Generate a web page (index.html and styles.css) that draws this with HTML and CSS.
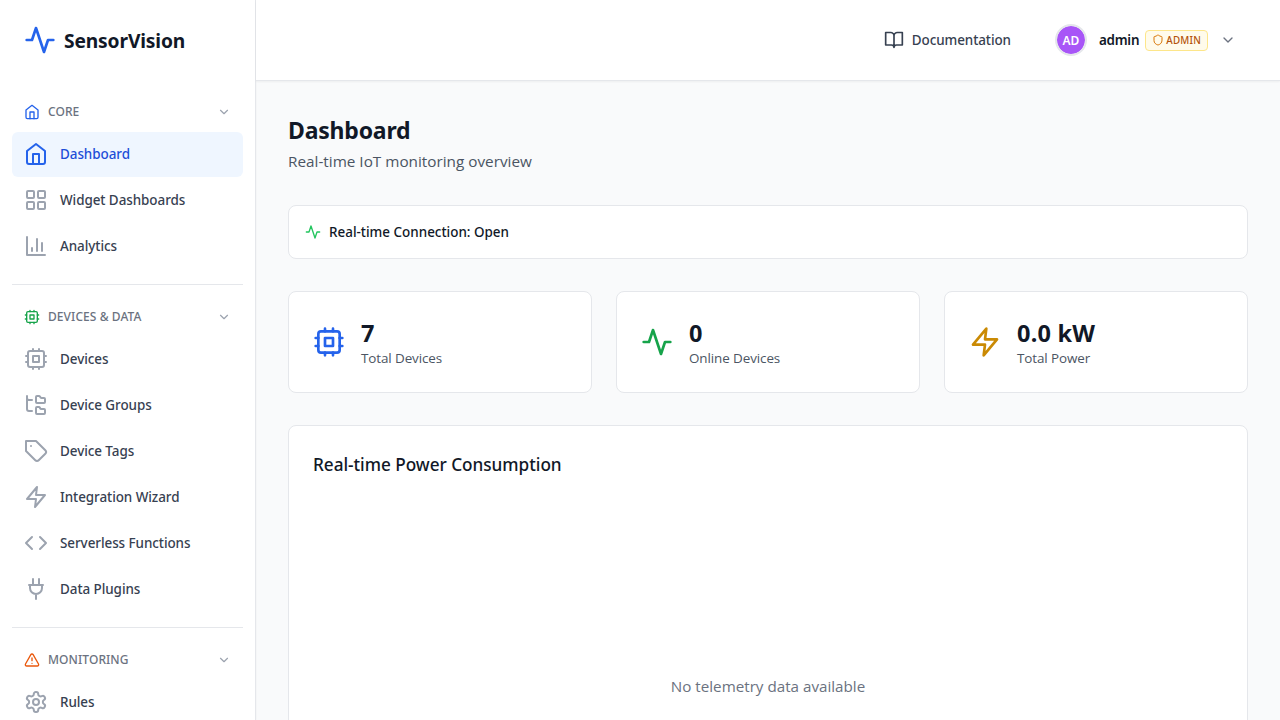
FILE: index.html
```
<!DOCTYPE html>
<html lang="en">
<head>
<meta charset="utf-8">
<title>SensorVision</title>
<link rel="stylesheet" href="styles.css">
</head>
<body>
<svg class="sprite" aria-hidden="true">
  <symbol id="activity" viewBox="0 0 24 24"><path d="M22 12h-4l-3 9L9 3l-3 9H2"/></symbol>
  <symbol id="home" viewBox="0 0 24 24"><path d="m3 9 9-7 9 7v11a2 2 0 0 1-2 2H5a2 2 0 0 1-2-2z"/><path d="M9 22V12h6v10"/></symbol>
  <symbol id="grid" viewBox="0 0 24 24"><rect x="3" y="3" width="7" height="7" rx="1"/><rect x="14" y="3" width="7" height="7" rx="1"/><rect x="14" y="14" width="7" height="7" rx="1"/><rect x="3" y="14" width="7" height="7" rx="1"/></symbol>
  <symbol id="chart" viewBox="0 0 24 24"><path d="M3 3v18h18M18 17V9M13 17V5M8 17v-3"/></symbol>
  <symbol id="cpu" viewBox="0 0 24 24"><rect x="4" y="4" width="16" height="16" rx="2"/><rect x="9" y="9" width="6" height="6"/><path d="M15 2v2M15 20v2M2 15h2M2 9h2M20 15h2M20 9h2M9 2v2M9 20v2"/></symbol>
  <symbol id="tree" viewBox="0 0 24 24"><path d="M13 10h7a1 1 0 0 0 1-1V6a1 1 0 0 0-1-1h-2.500a1 1 0 0 1-.8-.4l-.9-1.200A1 1 0 0 0 15 3h-2a1 1 0 0 0-1 1v5a1 1 0 0 0 1 1Z"/><path d="M13 21h7a1 1 0 0 0 1-1v-3a1 1 0 0 0-1-1h-2.880a1 1 0 0 1-.9-.55l-.44-.9a1 1 0 0 0-.9-.55H13a1 1 0 0 0-1 1v5a1 1 0 0 0 1 1Z"/><path d="M3 3v2c0 1.100.9 2 2 2h3M3 3v13c0 1.100.9 2 2 2h3"/></symbol>
  <symbol id="tag" viewBox="0 0 24 24"><path d="M12 2H2v10l9.290 9.290c.94.94 2.480.94 3.420 0l6.580-6.580c.94-.94.94-2.480 0-3.420L12 2Z"/><path d="M7 7h.01"/></symbol>
  <symbol id="zap" viewBox="0 0 24 24"><path d="M13 2 3 14h9l-1 8 10-12h-9l1-8z"/></symbol>
  <symbol id="code" viewBox="0 0 24 24"><path d="m16 18 6-6-6-6M8 6l-6 6 6 6"/></symbol>
  <symbol id="plug" viewBox="0 0 24 24"><path d="M9 2v6M15 2v6M12 17v5M5 8h14M6 11V8h12v3a6 6 0 1 1-12 0Z"/></symbol>
  <symbol id="alert" viewBox="0 0 24 24"><path d="m21.730 18-8-14a2 2 0 0 0-3.480 0l-8 14A2 2 0 0 0 4 21h16a2 2 0 0 0 1.730-3ZM12 9v4M12 17h.01"/></symbol>
  <symbol id="settings" viewBox="0 0 24 24"><path d="M12.220 2h-.44a2 2 0 0 0-2 2v.18a2 2 0 0 1-1 1.730l-.43.25a2 2 0 0 1-2 0l-.15-.08a2 2 0 0 0-2.730.73l-.22.38a2 2 0 0 0 .73 2.730l.15.1a2 2 0 0 1 1 1.720v.51a2 2 0 0 1-1 1.740l-.15.09a2 2 0 0 0-.73 2.730l.22.38a2 2 0 0 0 2.730.73l.15-.08a2 2 0 0 1 2 0l.43.25a2 2 0 0 1 1 1.730V20a2 2 0 0 0 2 2h.44a2 2 0 0 0 2-2v-.18a2 2 0 0 1 1-1.730l.43-.25a2 2 0 0 1 2 0l.15.08a2 2 0 0 0 2.730-.73l.22-.39a2 2 0 0 0-.73-2.730l-.15-.08a2 2 0 0 1-1-1.740v-.5a2 2 0 0 1 1-1.740l.15-.09a2 2 0 0 0 .73-2.730l-.22-.38a2 2 0 0 0-2.730-.73l-.15.08a2 2 0 0 1-2 0l-.43-.25a2 2 0 0 1-1-1.730V4a2 2 0 0 0-2-2z"/><circle cx="12" cy="12" r="3"/></symbol>
  <symbol id="book" viewBox="0 0 24 24"><path d="M2 3h6a4 4 0 0 1 4 4v14a3 3 0 0 0-3-3H2zM22 3h-6a4 4 0 0 0-4 4v14a3 3 0 0 1 3-3h7z"/></symbol>
  <symbol id="shield" viewBox="0 0 24 24"><path d="M20 13c0 5-3.500 7.500-7.660 8.950a1 1 0 0 1-.67-.01C7.500 20.500 4 18 4 13V6a1 1 0 0 1 1-1c2 0 4.500-1.200 6.240-2.720a1.170 1.170 0 0 1 1.520 0C14.510 3.810 17 5 19 5a1 1 0 0 1 1 1z"/></symbol>
  <symbol id="chevron" viewBox="0 0 24 24"><path d="m6 9 6 6 6-6"/></symbol>
</svg>
<div class="app">
  <aside class="sidebar">
    <div class="brand"><svg class="icon icon-xl"><use href="#activity"/></svg><span>SensorVision</span></div>
    <nav class="nav">
      <section class="group">
        <h2 class="group-title"><svg class="icon icon-sm core"><use href="#home"/></svg><span>CORE</span><svg class="icon icon-xs"><use href="#chevron"/></svg></h2>
        <a class="item active"><svg class="icon"><use href="#home"/></svg><span>Dashboard</span></a>
        <a class="item"><svg class="icon"><use href="#grid"/></svg><span>Widget Dashboards</span></a>
        <a class="item"><svg class="icon"><use href="#chart"/></svg><span>Analytics</span></a>
      </section>
      <section class="group">
        <h2 class="group-title"><svg class="icon icon-sm devices"><use href="#cpu"/></svg><span>DEVICES &amp; DATA</span><svg class="icon icon-xs"><use href="#chevron"/></svg></h2>
        <a class="item"><svg class="icon"><use href="#cpu"/></svg><span>Devices</span></a>
        <a class="item"><svg class="icon"><use href="#tree"/></svg><span>Device Groups</span></a>
        <a class="item"><svg class="icon"><use href="#tag"/></svg><span>Device Tags</span></a>
        <a class="item"><svg class="icon"><use href="#zap"/></svg><span>Integration Wizard</span></a>
        <a class="item"><svg class="icon"><use href="#code"/></svg><span>Serverless Functions</span></a>
        <a class="item"><svg class="icon"><use href="#plug"/></svg><span>Data Plugins</span></a>
      </section>
      <section class="group">
        <h2 class="group-title"><svg class="icon icon-sm monitoring"><use href="#alert"/></svg><span>MONITORING</span><svg class="icon icon-xs"><use href="#chevron"/></svg></h2>
        <a class="item"><svg class="icon"><use href="#settings"/></svg><span>Rules</span></a>
      </section>
    </nav>
  </aside>
  <div class="content">
    <header class="topbar">
      <a class="docs"><svg class="icon icon-md"><use href="#book"/></svg><span>Documentation</span></a>
      <div class="user">
        <span class="avatar">AD</span>
        <span class="username">admin</span>
        <span class="badge"><svg class="icon icon-2xs"><use href="#shield"/></svg><span>ADMIN</span></span>
        <svg class="icon icon-sm user-chevron"><use href="#chevron"/></svg>
      </div>
    </header>
    <main class="main">
      <h1 class="title">Dashboard</h1>
      <p class="subtitle">Real-time IoT monitoring overview</p>
      <div class="card status"><svg class="icon icon-sm"><use href="#activity"/></svg><span>Real-time Connection: Open</span></div>
      <div class="stats">
        <div class="card stat"><svg class="icon icon-xl blue"><use href="#cpu"/></svg><div><p class="value">7</p><p class="label">Total Devices</p></div></div>
        <div class="card stat"><svg class="icon icon-xl green"><use href="#activity"/></svg><div><p class="value">0</p><p class="label">Online Devices</p></div></div>
        <div class="card stat"><svg class="icon icon-xl yellow"><use href="#zap"/></svg><div><p class="value">0.0 kW</p><p class="label">Total Power</p></div></div>
      </div>
      <div class="card chart">
        <h2 class="chart-title">Real-time Power Consumption</h2>
        <div class="empty">No telemetry data available</div>
      </div>
    </main>
  </div>
</div>
</body>
</html>
```
FILE: styles.css
```
* { box-sizing: border-box; }
body {
  margin: 0;
  font-family: "Noto Sans", sans-serif;
  color: #111827;
  background: #f9fafb;
}
h1, h2, p { margin: 0; }
.sprite { display: none; }
.app { display: flex; height: 100vh; overflow: hidden; }

.icon {
  width: 24px;
  height: 24px;
  flex: none;
  fill: none;
  stroke: currentColor;
  stroke-width: 2;
  stroke-linecap: round;
  stroke-linejoin: round;
}
.icon-2xs { width: 12px; height: 12px; }
.icon-xs { width: 14px; height: 14px; }
.icon-sm { width: 16px; height: 16px; }
.icon-md { width: 20px; height: 20px; }
.icon-xl { width: 32px; height: 32px; }

.sidebar {
  width: 256px;
  flex: none;
  background: #fff;
  border-right: 1px solid #e5e7eb;
  box-shadow: 0 1px 2px rgba(0, 0, 0, .05);
}
.brand {
  display: flex;
  align-items: center;
  gap: 8px;
  height: 80px;
  padding-left: 24px;
  font-size: 19.200px;
  font-weight: 700;
  letter-spacing: -.13px;
  line-height: 28px;
}
.brand .icon { color: #2563eb; }
.brand span { padding-top: 2px; }
.nav { padding: 16px 12px; }
.group + .group {
  margin-top: 15px;
  padding-top: 16px;
  border-top: 1px solid #e5e7eb;
}
.group-title {
  display: flex;
  align-items: center;
  gap: 8px;
  height: 32px;
  margin-bottom: 4px;
  padding: 0 12px;
  font-size: 12px;
  font-weight: 500;
  letter-spacing: .08px;
  line-height: 16px;
  color: #6b7280;
}
.group-title span { flex: 1; }
.group-title .icon-xs { color: #9ca3af; }
.group-title .core { color: #2563eb; }
.group-title .devices { color: #16a34a; }
.group-title .monitoring { color: #ea580c; }
.item {
  display: flex;
  align-items: center;
  gap: 12px;
  height: 45px;
  margin-bottom: 1px;
  padding: 0 12px 1px;
  border-radius: 6px;
  font-size: 13.440px;
  font-weight: 500;
  letter-spacing: -.06px;
  line-height: 20px;
  color: #374151;
}
.item .icon { color: #9ca3af; }
.item.active { background: #eff6ff; color: #1d4ed8; }
.item.active .icon { color: #2563eb; }

.content { flex: 1; min-width: 0; display: flex; flex-direction: column; }
.topbar {
  display: flex;
  align-items: center;
  justify-content: flex-end;
  gap: 44px;
  height: 81px;
  flex: none;
  padding-right: 44px;
  background: #fff;
  border-bottom: 1px solid #e5e7eb;
  box-shadow: 0 1px 2px rgba(0, 0, 0, .05);
}
.docs {
  display: flex;
  align-items: center;
  gap: 8px;
  font-size: 13.440px;
  font-weight: 500;
  letter-spacing: -.08px;
  color: #374151;
}
.user { display: flex; align-items: center; }
.avatar {
  display: grid;
  place-items: center;
  width: 32px;
  height: 32px;
  margin-right: 12px;
  border: 2px solid #e5e7eb;
  border-radius: 50%;
  background: #a855f7;
  background-clip: padding-box;
  color: #fff;
  font-size: 12px;
  font-weight: 600;
  letter-spacing: -.1px;
}
.username { margin-right: 6px; font-size: 13.440px; font-weight: 600; letter-spacing: -.25px; }
.badge {
  display: flex;
  align-items: center;
  gap: 2px;
  height: 21px;
  margin-right: 12px;
  padding: 0 6px;
  border: 1px solid #fde68a;
  border-radius: 4px;
  background: #fffbeb;
  color: #b45309;
  font-size: 9.800px;
  font-weight: 500;
  letter-spacing: .22px;
}
.badge .icon { color: #d97706; }
.user-chevron { color: #6b7280; }

.main { padding: 32px; }
.title {
  padding-top: 1px;
  font-size: 23px;
  font-weight: 700;
  letter-spacing: -.2px;
  line-height: 32px;
}
.subtitle {
  margin-bottom: 32px;
  padding-top: 3px;
  font-family: "Open Sans", sans-serif;
  font-size: 15.300px;
  line-height: 24px;
  color: #4b5563;
}
.card { background: #fff; border: 1px solid #e5e7eb; border-radius: 8px; }
.status {
  display: flex;
  align-items: center;
  gap: 8px;
  height: 54px;
  padding: 0 16px;
  font-size: 13.440px;
  font-weight: 500;
}
.status .icon { color: #22c55e; }
.stats {
  display: grid;
  grid-template-columns: repeat(3, 1fr);
  gap: 24px;
  margin: 32px 0;
}
.stat {
  display: flex;
  align-items: center;
  gap: 16px;
  height: 102px;
  padding: 0 24px;
}
.value {
  padding-top: 1px;
  margin-bottom: -1px;
  font-size: 23.500px;
  font-weight: 700;
  letter-spacing: .2px;
  line-height: 32px;
}
.label {
  font-family: "Open Sans", sans-serif;
  font-size: 13.440px;
  letter-spacing: -.1px;
  line-height: 20px;
  color: #4b5563;
}
.blue { color: #2563eb; }
.green { color: #16a34a; }
.yellow { color: #ca8a04; }
.chart { padding: 25px 24px 24px; }
.chart-title {
  margin-bottom: 31px;
  font-size: 17.200px;
  font-weight: 500;
  letter-spacing: -.03px;
  line-height: 28px;
}
.empty {
  display: grid;
  place-items: center;
  height: 352px;
  font-family: "Open Sans", sans-serif;
  font-size: 15.200px;
  color: #6b7280;
}
```
